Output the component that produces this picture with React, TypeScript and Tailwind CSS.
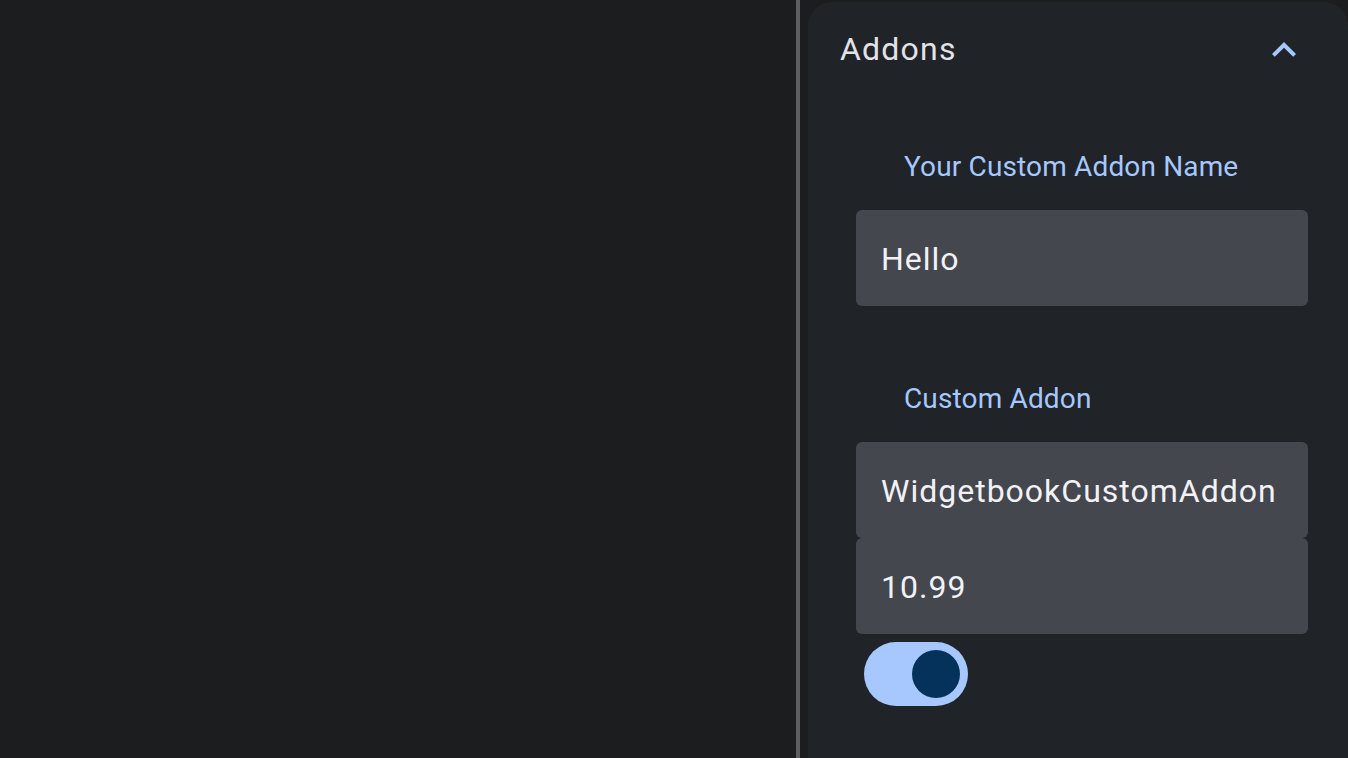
import { useState } from "react";

const fieldClass =
  "flex h-[96px] w-full items-center rounded-[6px] bg-[#44474e] pl-[25px] pt-[1px] " +
  "text-[32px] tracking-[1px] text-[#f2f1f5]";

function AddonField({ value }: { value: string }) {
  return <div className={fieldClass}>{value}</div>;
}

function AddonLabel({ children }: { children: string }) {
  return (
    <p className="pl-[48px] text-[28px] leading-[40px] tracking-[0.15px] text-[#a6c8ff]">
      {children}
    </p>
  );
}

function Toggle() {
  const [on, setOn] = useState(true);

  return (
    <button
      className={
        "ml-[8px] flex h-[64px] w-[104px] items-center rounded-full px-[8px] " +
        (on ? "justify-end bg-[#a6c8ff]" : "justify-start bg-[#44474e]")
      }
      onClick={() => setOn(!on)}
      type="button"
    >
      <span className="block h-[48px] w-[48px] rounded-full bg-[#04325a]" />
    </button>
  );
}

export default function App() {
  return (
    <div className="flex h-[758px] w-[1348px] overflow-hidden bg-[#1c1d1f] font-['Roboto',sans-serif]">
      <div className="flex-1" />
      <div className="w-[4px] bg-[#5e5e5e]" />
      <aside className="mt-[2px] ml-[8px] flex w-[540px] flex-col rounded-t-[24px] bg-[#202328]">
        <header className="flex h-[94px] items-center justify-between pl-[32px] pr-[40px]">
          <h2 className="text-[32px] tracking-[1.2px] text-[#e3e2e6]">Addons</h2>
          <svg
            className="mt-[2px] h-[48px] w-[48px] fill-[#a6c8ff]"
            viewBox="0 0 24 24"
          >
            <path d="M12 8l-6 6 1.41 1.41L12 10.83l4.59 4.58L18 14z" />
          </svg>
        </header>

        <div className="flex flex-col pl-[48px] pr-[40px]">
          <div className="mt-[51px]">
            <AddonLabel>Your Custom Addon Name</AddonLabel>
          </div>
          <div className="mt-[23px]">
            <AddonField value="Hello" />
          </div>

          <div className="mt-[73px]">
            <AddonLabel>Custom Addon</AddonLabel>
          </div>
          <div className="mt-[23px] flex flex-col">
            <AddonField value="WidgetbookCustomAddon" />
            <AddonField value="10.99" />
          </div>
          <div className="mt-[8px]">
            <Toggle />
          </div>
        </div>
      </aside>
    </div>
  );
}
